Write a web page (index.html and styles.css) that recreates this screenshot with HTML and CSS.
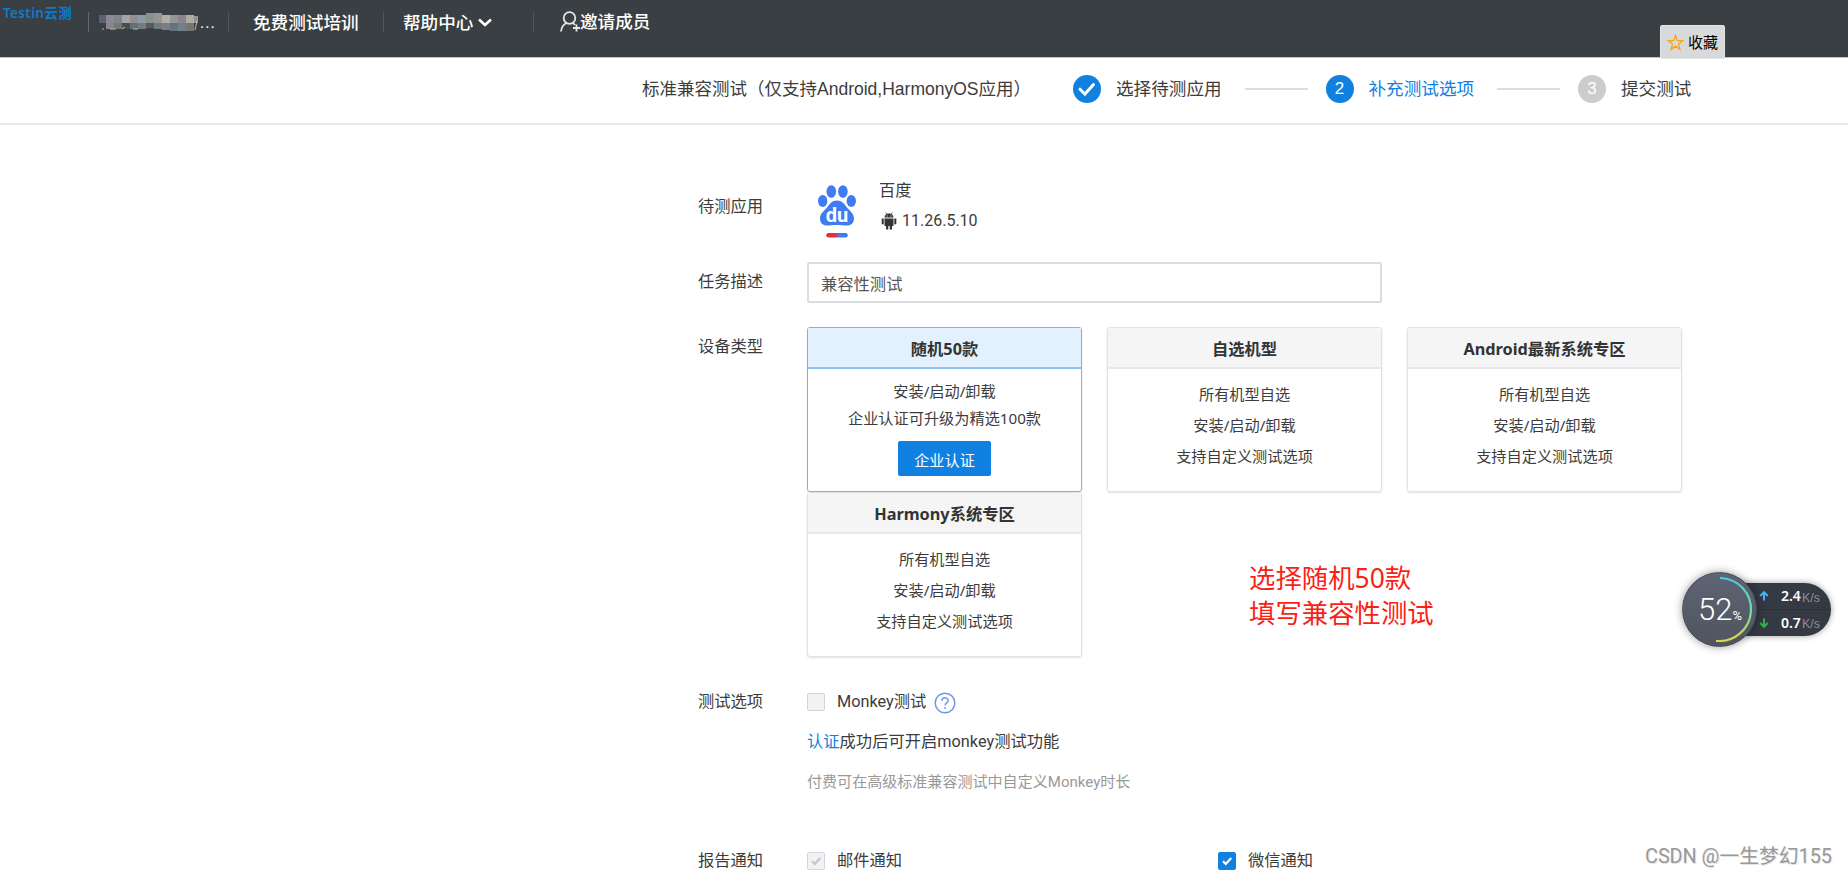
FILE: index.html
```html
<!DOCTYPE html>
<html lang="zh-CN">
<head>
    <meta charset="UTF-8">
    <meta name="viewport" content="width=device-width, initial-scale=1.0">
    <title>Testin云测</title>
    <link rel="stylesheet" href="styles.css">
</head>
<body>
    <header class="topbar">
        <div class="logo">Testin云测</div>
        <div class="account">
            <svg class="masked" width="104" height="20" viewBox="0 0 104 20">
                <path fill="#5b6270" d="M1 3h7v8h-7z"/>
                <path fill="#8e8799" d="M8 3h8v8h-8z"/>
                <path fill="#7f8689" d="M16 3h8v8h-8z"/>
                <path fill="#a3a5a7" d="M24 3h8v8h-8z"/>
                <path fill="#938e93" d="M32 3h8v8h-8z"/>
                <path fill="#8e98a9" d="M40 3h8v8h-8z"/>
                <path fill="#87928f" d="M48 1h8v10h-8z"/>
                <path fill="#949594" d="M56 1h8v10h-8z"/>
                <path fill="#b1aeaa" d="M64 3h8v8h-8z"/>
                <path fill="#949599" d="M72 3h8v8h-8z"/>
                <path fill="#8b8490" d="M80 3h8v8h-8z"/>
                <path fill="#adaba4" d="M88 3h8v8h-8z"/>
                <path fill="#91958f" d="M96 4h4v7h-4z"/>
                <path fill="#85858a" d="M8 11h8v6h-8z"/>
                <path fill="#78766e" d="M16 11h8v6h-8z"/>
                <path fill="#474d4d" d="M24 11h8v6h-8z"/>
                <path fill="#607276" d="M32 11h8v6h-8z"/>
                <path fill="#707d7c" d="M40 11h8v6h-8z"/>
                <path fill="#555b60" d="M48 11h8v5h-8z"/>
                <path fill="#6f7b80" d="M56 11h8v6h-8z"/>
                <path fill="#7a7d88" d="M64 11h8v7h-8z"/>
                <path fill="#67727d" d="M72 11h8v8h-8z"/>
                <path fill="#71808b" d="M80 11h8v8h-8z"/>
                <path fill="#77766f" d="M88 11h8v8h-8z"/>
                <path stroke="#b5b8ba" d="M5 16v2M12 17h6M24 17l3-2M35 17h5M99 9l-2 9" fill="none"/>
            </svg>
            <span class="dots">...</span>
        </div>
        <a class="nav nav-train">免费测试培训</a>
        <a class="nav nav-help">帮助中心
            <svg width="14" height="9" viewBox="0 0 14 9"><path d="M1 1.500L7 7l6-5.500" fill="none" stroke="#fff" stroke-width="2.600"/></svg>
        </a>
        <a class="nav nav-invite">
            <svg width="20" height="22" viewBox="0 0 20 22" fill="none" stroke="#e4e6e7" stroke-width="1.800">
                <circle cx="9.500" cy="7" r="5.800"/>
                <path d="M1 20.500c.5-4.500 2.500-7 5.500-8.500M12.500 12c1 .5 1.800 1 2.500 2M16.500 13.500v7M13 17h7"/>
            </svg>邀请成员
        </a>
        <div class="collect">
            <svg width="17" height="17" viewBox="0 0 17 17"><path d="M8.500 1.500l1.800 5.200h5.400l-4.300 3.300 1.600 5.300-4.500-3.200L4 15.300l1.600-5.300L1.300 6.700h5.400z" fill="none" stroke="#f9a41f" stroke-width="1.300"/></svg>
            收藏
        </div>
    </header>

    <div class="steps">
        <span class="steps-title">标准兼容测试（仅支持Android,HarmonyOS应用）</span>
        <span class="step-icon">
            <svg width="28" height="28" viewBox="0 0 28 28"><path d="M7 14.200l4.900 4.900 8.600-9.600" fill="none" stroke="#fff" stroke-width="3" stroke-linecap="round"/></svg>
        </span>
        <span class="step-text">选择待测应用</span>
        <span class="step-line"></span>
        <span class="step-icon">2</span>
        <span class="step-text current">补充测试选项</span>
        <span class="step-line"></span>
        <span class="step-icon waiting">3</span>
        <span class="step-text">提交测试</span>
    </div>

    <main class="form">
        <div class="row row-app">
            <label class="label">待测应用</label>
            <svg class="app-icon" width="38" height="54" viewBox="0 0 38 54">
                <g fill="#3f7cf4">
                    <ellipse cx="13.300" cy="6.500" rx="4.800" ry="6.300"/>
                    <ellipse cx="24.900" cy="6.500" rx="4.800" ry="6.300"/>
                    <ellipse cx="4.700" cy="16" rx="4.700" ry="6"/>
                    <ellipse cx="33.300" cy="16" rx="4.700" ry="6"/>
                    <path d="M19 15.500c5 0 7.500 3.500 10 7 3 3.500 7 6 7 11 0 4.500-3 7-7 7-3 0-6-.5-10-.5s-7 .5-10 .5c-4 0-7-2.500-7-7 0-5 4-7.500 7-11 2.500-3.500 5-7 10-7z"/>
                    <path d="M19 48h8.500a2 2 0 0 1 0 4.500H19z"/>
                </g>
                <path d="M19 48h-8.500a2 2 0 0 0 0 4.500H19z" fill="#e0323c"/>
                <text class="app-du" x="19" y="37" text-anchor="middle">du</text>
            </svg>
            <div class="app-info">
                <div>百度</div>
                <div class="version">
                    <svg width="16" height="18" viewBox="0 0 16 18" fill="#333">
                        <path d="M3.500 5.500C3.700 3 5.500 1.500 8 1.500S12.300 3 12.500 5.500zM3.500 6.500h9V14h-9z"/>
                        <path d="M5 13h2.300v4.500H5zM8.700 13H11v4.500H8.700zM.7 6.500h2v5.700h-2zM13.300 6.500h2v5.700h-2z"/>
                        <path d="M4.700.5l1.500 2M11.300.5l-1.500 2" stroke="#333" stroke-width=".7"/>
                        <path d="M5.700 3.500h1v1h-1zM9.300 3.500h1v1h-1z" fill="#fff"/>
                    </svg>
                    <span>11.26.5.10</span>
                </div>
            </div>
        </div>

        <div class="row row-desc">
            <label class="label">任务描述</label>
            <input class="desc-input" type="text" value="兼容性测试">
        </div>

        <div class="row row-device">
            <label class="label">设备类型</label>
            <div class="cards">
                <div class="card selected">
                    <h3>随机50款</h3>
                    <p>安装/启动/卸载</p>
                    <p>企业认证可升级为精选100款</p>
                    <button class="btn">企业认证</button>
                </div>
                <div class="card">
                    <h3>自选机型</h3>
                    <p>所有机型自选</p>
                    <p>安装/启动/卸载</p>
                    <p>支持自定义测试选项</p>
                </div>
                <div class="card">
                    <h3>Android最新系统专区</h3>
                    <p>所有机型自选</p>
                    <p>安装/启动/卸载</p>
                    <p>支持自定义测试选项</p>
                </div>
                <div class="card">
                    <h3>Harmony系统专区</h3>
                    <p>所有机型自选</p>
                    <p>安装/启动/卸载</p>
                    <p>支持自定义测试选项</p>
                </div>
            </div>
        </div>

        <div class="row row-options">
            <label class="label">测试选项</label>
            <div>
                <div class="check-line">
                    <span class="checkbox"></span>Monkey测试
                    <svg class="help" width="22" height="22" viewBox="0 0 22 22" fill="none" stroke="#6f97ea" stroke-width="1.500">
                        <circle cx="11" cy="11" r="9.800"/>
                        <path d="M7.900 8.800c0-4 6.300-4 6.300-.2 0 2.300-3.100 2.300-3.100 5M11.100 15v1.700"/>
                    </svg>
                </div>
                <p class="tip"><a>认证</a>成功后可开启monkey测试功能</p>
                <p class="tip-gray">付费可在高级标准兼容测试中自定义Monkey时长</p>
            </div>
        </div>

        <div class="row">
            <label class="label">报告通知</label>
            <div class="check-line notice">
                <span class="checkbox">
                    <svg width="16" height="16" viewBox="0 0 16 16"><path d="M4 8.200l2.800 2.700L12.200 5" fill="none" stroke="#c3c5c9" stroke-width="2.200"/></svg>
                </span>邮件通知
            </div>
            <div class="check-line notice">
                <span class="checkbox checked">
                    <svg width="16" height="16" viewBox="0 0 16 16"><path d="M4 8.200l2.800 2.700L12.200 5" fill="none" stroke="#fff" stroke-width="2.200"/></svg>
                </span>微信通知
            </div>
        </div>
    </main>

    <div class="note">选择随机50款<br>填写兼容性测试</div>

    <!-- floating network monitor -->
    <div class="monitor">
        <div class="speed">
            <div class="speed-row">
                <svg width="10" height="10" viewBox="0 0 10 10"><path d="M5 9.500V1.500M1.200 5L5 1.200 8.800 5" fill="none" stroke="#45b4f5" stroke-width="2"/></svg>
                <b>2.4</b><i>K/s</i>
            </div>
            <div class="speed-row">
                <svg width="10" height="10" viewBox="0 0 10 10"><path d="M5 .5v8M1.200 5L5 8.800 8.800 5" fill="none" stroke="#2fb344" stroke-width="2"/></svg>
                <b>0.7</b><i>K/s</i>
            </div>
        </div>
        <div class="dial">
            <svg class="arc" width="75" height="75" viewBox="0 0 75 75">
                <defs>
                    <linearGradient id="arc" x1="0" y1="0" x2="0" y2="1">
                        <stop offset="0" stop-color="#48cfdb"/>
                        <stop offset=".5" stop-color="#6edba5"/>
                        <stop offset="1" stop-color="#d8d64f"/>
                    </linearGradient>
                </defs>
                <path d="M38 6a31.500 31.500 0 1 1-4 62.800" fill="none" stroke="url(#arc)" stroke-width="2.200"/>
            </svg>
            <span class="num">52</span><span class="pct">%</span>
        </div>
    </div>

    <div class="watermark">CSDN @一生梦幻155</div>
</body>
</html>
```

FILE: styles.css
```css
/* Global Styles */
* {
    box-sizing: border-box;
}

body {
    margin: 0;
    height: 876px;
    overflow: hidden;
    position: relative;
    background: #fff;
    color: #3c3c3c;
    font-family: Roboto, "Noto Sans CJK SC", sans-serif;
    font-size: 16.3px;
    line-height: 24px;
}

svg {
    flex: none;
}

p, h3 {
    margin: 0;
}

/* Top bar */
.topbar {
    display: flex;
    height: 58px;
    background: #3a3f43;
    border-bottom: 1px solid #c3c3c6;
    color: #fff;
    white-space: nowrap;
}

.logo {
    width: 88px;
    padding: 1px 0 0 3px;
    color: #0c7ccc;
    font-family: "Noto Sans", "Noto Sans CJK SC", sans-serif;
    font-size: 13.5px;
    font-weight: 600;
    letter-spacing: 0.35px;
}

.account {
    display: flex;
    width: 140px;
    height: 20px;
    margin-top: 12px;
    padding-left: 9px;
    border-left: 1px solid #65696c;
}

.dots {
    margin-left: -2px;
    line-height: 22px;
    letter-spacing: 1px;
}

.nav {
    display: flex;
    align-items: center;
    height: 20px;
    margin-top: 12px;
    padding-top: 1px;
    border-left: 1px solid #515659;
    font-size: 17.6px;
    font-weight: 500;
}

.nav-train {
    width: 155px;
    padding-left: 24px;
}

.nav-help {
    width: 150px;
    padding-left: 19px;
    gap: 5px;
}

.nav-invite {
    padding: 0 0 0 26px;
}

.collect {
    display: flex;
    align-items: center;
    width: 65px;
    height: 34px;
    margin: 25px 123px 0 auto;
    padding: 1px 0 0 6px;
    gap: 4px;
    background: #d8d9da;
    border: 1px solid #e3e3e4;
    border-radius: 2px;
    color: #000;
    font-size: 15px;
}

/* Steps */
.steps {
    display: flex;
    align-items: center;
    height: 67px;
    padding: 0 0 4px 642px;
    border-bottom: 2px solid #e8e8e8;
    font-family: "Liberation Sans", "Noto Sans CJK SC", sans-serif;
    font-size: 17.6px;
    white-space: nowrap;
}

.steps-title {
    width: 431px;
    font-size: 17.5px;
}

.step-icon {
    display: flex;
    align-items: center;
    justify-content: center;
    width: 28px;
    height: 28px;
    border-radius: 50%;
    background: #1181e1;
    color: #fff;
    font-size: 17px;
}

.step-icon.waiting {
    background: #ccc;
}

.step-text {
    width: 106px;
    margin-left: 15px;
}

.step-text.current {
    color: #1181e1;
}

.step-line {
    width: 63px;
    height: 2px;
    margin: 0 18px 0 22.500px;
    background: #ddd;
}

/* Form */
.form {
    padding: 48px 0 0 698px;
}

.row {
    display: flex;
}

.label {
    flex: none;
    width: 109px;
    padding-top: 6px;
}

.row-app {
    height: 89px;
}

.row-app .label {
    padding-top: 22px;
}

.app-icon {
    margin: 12px 23px 0 11px;
}

.app-du {
    fill: #fff;
    font: bold 20px Roboto, sans-serif;
}

.app-info {
    padding-top: 6px;
}

.version {
    display: flex;
    align-items: center;
    margin-top: 6px;
    gap: 5px;
    padding-left: 2px;
    font-size: 16px;
}

.row-desc {
    height: 65px;
}

.row-desc .label,
.row-device .label {
    padding-top: 8px;
}

.desc-input {
    width: 575px;
    height: 41px;
    padding: 1px 12px 0;
    border: 2px solid #ddd;
    border-radius: 2px;
    color: #555;
    font: inherit;
}

/* Device cards */
.row-device {
    height: 357px;
}

.cards {
    display: flex;
    flex-wrap: wrap;
    align-content: flex-start;
    width: 900px;
    column-gap: 25px;
}

.card {
    width: 275px;
    height: 165px;
    border: 1px solid #e2e2e2;
    border-radius: 3px;
    box-shadow: 0 1px 2px rgba(0, 0, 0, 0.12);
    font-family: "Noto Sans", "Noto Sans CJK SC", sans-serif;
    font-size: 15.2px;
    line-height: 31px;
    text-align: center;
}

.card h3 {
    height: 41px;
    margin-bottom: 10px;
    padding-top: 1px;
    background: #f5f5f5;
    border-bottom: 2px solid #e8e8e8;
    color: #333;
    font-size: 16.3px;
    line-height: 41px;
}

.card.selected {
    border-color: #72b6f2;
    line-height: 27px;
}

.card.selected h3 {
    margin-bottom: 9px;
    background: #e3f1fe;
    border-color: #8bc5f7;
}

.btn {
    width: 93px;
    height: 35px;
    margin-top: 9px;
    padding: 3px 0 0;
    border: 0;
    border-radius: 2px;
    background: #1181e1;
    color: #fff;
    font: inherit;
}

/* Options */
.row-options {
    height: 159px;
}

.check-line {
    display: flex;
    align-items: center;
    height: 24px;
    margin-top: 6px;
}

.checkbox {
    display: flex;
    width: 18px;
    height: 18px;
    margin-right: 12px;
    border: 1px solid #d3d4d8;
    border-radius: 2px;
    background: #f1f2f6;
}

.checkbox.checked {
    background: #1181e1;
    border-color: #1181e1;
}

.help {
    margin: 2px 0 0 8px;
}

.tip {
    margin-top: 16px;
}

.tip a {
    color: #1181e1;
}

.tip-gray {
    margin-top: 16px;
    color: #999;
    font-size: 15.05px;
}

.notice {
    width: 411px;
}

/* Floating layers */
.note {
    position: absolute;
    left: 1249px;
    top: 561px;
    color: #fb1f16;
    font-family: "Noto Sans", "Noto Sans CJK SC", sans-serif;
    font-size: 26.4px;
    line-height: 35px;
}

.monitor {
    position: absolute;
    left: 1682px;
    top: 572px;
    width: 149px;
    height: 75px;
}

.speed {
    position: absolute;
    left: 40px;
    top: 11px;
    width: 109px;
    height: 53px;
    padding-left: 37px;
    border-radius: 0 27px 27px 0;
    background: #343943;
    box-shadow: 0 0 6px rgba(0, 0, 0, 0.4);
}

.speed-row {
    display: flex;
    align-items: center;
    height: 26px;
    color: #fff;
    font-family: "Noto Sans", sans-serif;
    font-size: 14px;
}

.speed-row b {
    width: 21px;
    margin-left: 12px;
    font-weight: 600;
}

.speed-row + .speed-row {
    border-top: 1px solid #2d323a;
}

.speed-row i {
    padding-top: 3px;
    color: #8b8f97;
    font-family: "Liberation Sans", sans-serif;
    font-size: 12.5px;
    font-style: normal;
}

.dial {
    position: absolute;
    display: flex;
    width: 75px;
    height: 75px;
    padding-left: 15px;
    border: 1px solid #454955;
    border-radius: 50%;
    background: linear-gradient(#5e6474, #50545f);
    box-shadow: 0 0 8px rgba(0, 0, 0, 0.4);
    color: #fff;
    font-family: Roboto, sans-serif;
    line-height: 73px;
}

.arc {
    position: absolute;
    left: -1px;
    top: -1px;
}

.num {
    font-size: 31px;
    font-weight: 300;
}

.pct {
    font-size: 13px;
    line-height: 85px;
}

.watermark {
    position: absolute;
    left: 1645px;
    top: 843px;
    color: #999;
    font-size: 19.8px;
    line-height: 28px;
    text-shadow: 1px 1px 0 #e4e4e4;
    white-space: nowrap;
}
```
